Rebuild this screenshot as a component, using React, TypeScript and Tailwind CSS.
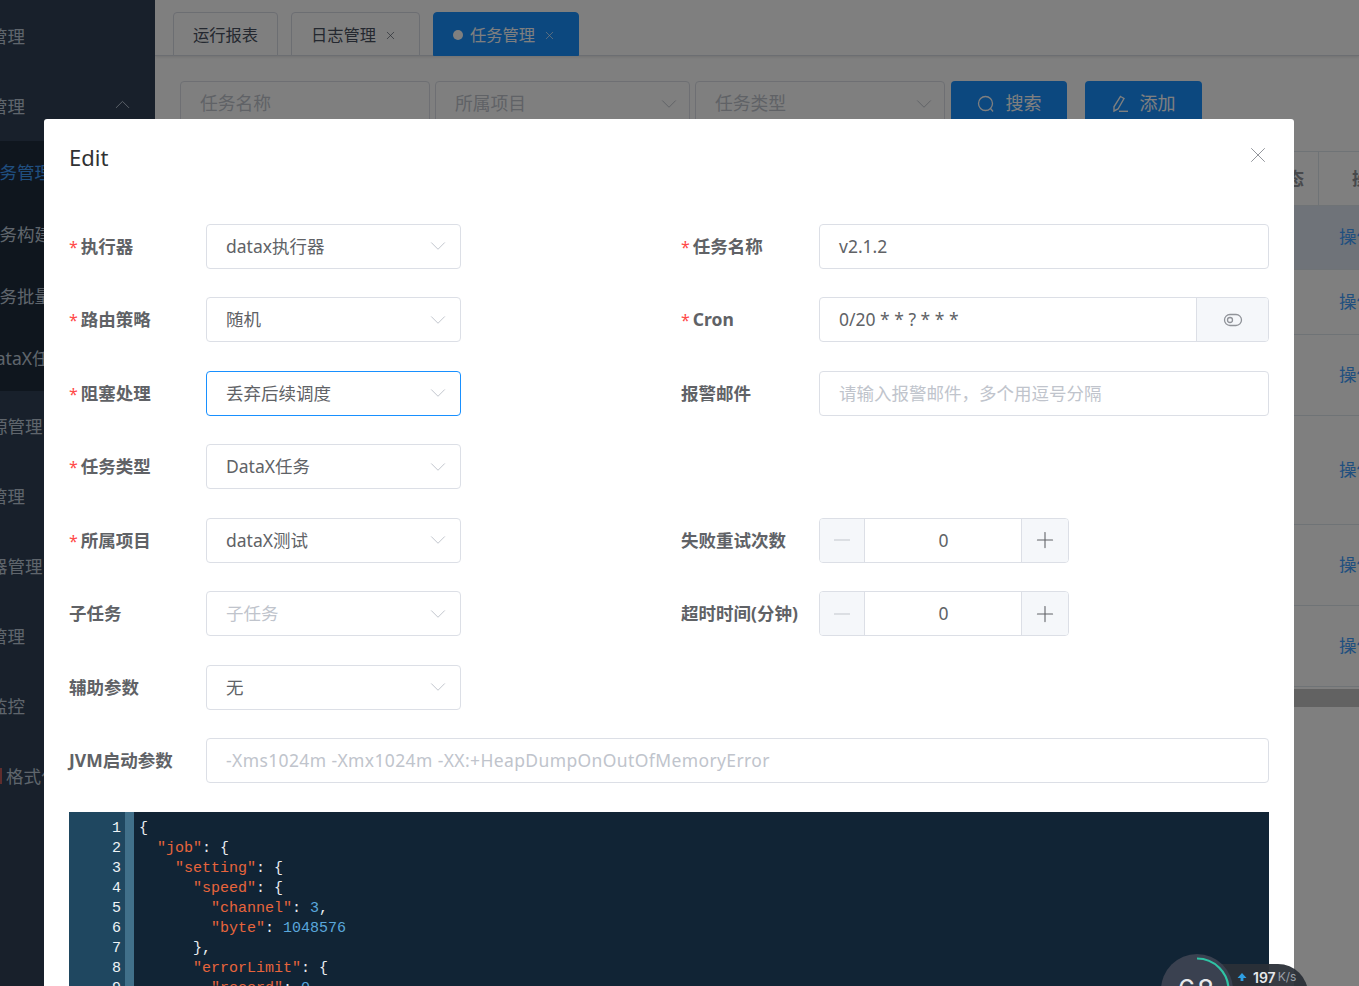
import React from "react";
import { ChevronDown, ChevronUp, Plus, Minus, X } from "lucide-react";

const cjk = "font-['Noto_Sans','Noto_Sans_CJK_SC',sans-serif]";

function Select({ value, placeholder, focus }: { value: string; placeholder?: boolean; focus?: boolean }) {
  return (
    <div className={`w-[255px] h-[45px] rounded-[4px] border flex items-center justify-between pl-[19px] pr-[9px] text-[17.5px] ${focus ? "border-[#1890ff]" : "border-[#dcdfe6]"} ${placeholder ? "text-[#c0c4cc]" : "text-[#606266]"}`}>
      <span className="pb-[1px]">{value}</span>
      <ChevronDown size={26} strokeWidth={0.9} className="text-[#c0c4cc]" />
    </div>
  );
}

function Field({ label, req, right, children }: { label?: string; req?: boolean; right?: boolean; children?: React.ReactNode }) {
  return (
    <div className="flex items-center h-[45px]">
      <div className={`${right ? "w-[138px]" : "w-[137px]"} pb-[1px] text-[17.5px] font-bold text-[#606266] whitespace-nowrap shrink-0`}>
        {req && <span className="text-[#ff4949] text-[16px] font-normal mr-[3px]">*</span>}
        {label}
      </div>
      {children}
    </div>
  );
}

function NumberInput() {
  return (
    <div className="w-[250px] h-[45px] rounded-[4px] border border-[#dcdfe6] flex text-[17.5px] text-[#606266] overflow-hidden">
      <div className="w-[45px] bg-[#f5f7fa] border-r border-[#dcdfe6] flex items-center justify-center">
        <Minus size={26} strokeWidth={0.9} className="text-[#c0c4cc]" />
      </div>
      <div className="flex-1 flex items-center justify-center pb-[1px] pl-[1px]">0</div>
      <div className="w-[47px] bg-[#f5f7fa] border-l border-[#dcdfe6] flex items-center justify-center">
        <Plus size={26} strokeWidth={1} className="text-[#606266]" />
      </div>
    </div>
  );
}

const P = ({ c }: { c: string }) => <span className="text-[#e9edf0]">{c}</span>;
const S = ({ c }: { c: string }) => <span className="text-[#e8643c]">{c}</span>;
const N = ({ c }: { c: string }) => <span className="text-[#5aa7dc]">{c}</span>;

const code: React.ReactNode[] = [
  <P c="{" />,
  <>  <S c={'"job"'} /><P c=": {" /></>,
  <>    <S c={'"setting"'} /><P c=": {" /></>,
  <>      <S c={'"speed"'} /><P c=": {" /></>,
  <>        <S c={'"channel"'} /><P c=": " /><N c="3" /><P c="," /></>,
  <>        <S c={'"byte"'} /><P c=": " /><N c="1048576" /></>,
  <>      <P c="}," /></>,
  <>      <S c={'"errorLimit"'} /><P c=": {" /></>,
  <>        <S c={'"record"'} /><P c=": " /><N c="0" /><P c="," /></>,
];

const subItems = ["任务管理", "任务构建", "任务批量构建", "DataX任务模板"];

function Sidebar() {
  const Top = ({ t }: { t: string }) => (
    <div className="h-[70px] flex items-center ml-[-45px] text-[17.5px] text-[#bfcbd9] whitespace-nowrap shrink-0">{t}</div>
  );
  return (
    <div className="w-[155px] shrink-0 bg-[#304156] overflow-hidden pt-[1px]">
      <Top t="调度管理" />
      <div className="h-[70px] flex items-center justify-between text-[17.5px] text-[#bfcbd9]">
        <span className="ml-[-45px] whitespace-nowrap">任务管理</span>
        <ChevronUp size={25} strokeWidth={0.9} className="mr-[20px] mt-[-3px]" />
      </div>
      <div className="bg-[#1f2d3d] h-[250px] flex flex-col text-[17.5px]">
        {subItems.map((s, i) => (
          <div key={s} className={`h-[62px] flex items-center whitespace-nowrap ${i === 0 ? "text-[#409eff]" : "text-[#bfcbd9]"}`}>
            <span className={i === 3 ? "ml-[-17px]" : "ml-[-18px]"}>{s}</span>
          </div>
        ))}
      </div>
      <Top t="数据源管理" />
      <Top t="项目管理" />
      <Top t="执行器管理" />
      <Top t="用户管理" />
      <Top t="运行监控" />
      <div className="h-[70px] flex items-center text-[17.5px] text-[#bfcbd9] whitespace-nowrap">
        <span className="w-[2px] h-[16px] bg-[#bf5b5b] mr-[4px]" />
        格式化
      </div>
    </div>
  );
}

function Tab({ t, active, close, w }: { t: string; active?: boolean; close?: boolean; w: string }) {
  return (
    <div className={`${w} h-[44px] rounded-t-[4px] border flex items-center pl-[19px] pt-[2px] text-[16.25px] whitespace-nowrap ${active ? "bg-[#1890ff] border-[#1890ff] text-white" : "bg-white border-[#d8dce5] text-[#495060]"}`}>
      {active && <span className="w-[10px] h-[10px] rounded-full bg-white mr-[7px]" />}
      {t}
      {close && <X size={13} strokeWidth={1.2} className="ml-[8px]" />}
    </div>
  );
}

function FilterSelect({ t, w, arrow }: { t: string; w: string; arrow?: boolean }) {
  return (
    <div className={`${w} h-[45px] rounded-[4px] border border-[#dcdfe6] flex items-center justify-between pl-[19px] pr-[7px] text-[17.75px] text-[#c0c4cc]`}>
      {t}
      {arrow && <ChevronDown size={26} strokeWidth={0.9} />}
    </div>
  );
}

function Background() {
  const rows = [64, 65, 81, 109, 81, 81];
  return (
    <div className="flex-1 min-w-0 bg-white flex flex-col overflow-hidden">
      <div className="h-[56px] shrink-0 border-b border-[#d8dce5] shadow-[0_1px_3px_rgba(0,0,0,0.12)] pt-[12px] pl-[18px] flex gap-[13px]">
        <Tab t="运行报表" w="w-[105px]" />
        <Tab t="日志管理" close w="w-[129px]" />
        <Tab t="任务管理" active close w="w-[146px]" />
      </div>
      <div className="pl-[25px] pt-[25px] flex shrink-0">
        <FilterSelect t="任务名称" w="w-[250px] mr-[5px]" />
        <FilterSelect t="所属项目" arrow w="w-[255px] mr-[5px]" />
        <FilterSelect t="任务类型" arrow w="w-[250px] mr-[6px]" />
        <div className="w-[116px] h-[45px] rounded-[4px] bg-[#1890ff] text-white text-[18px] flex items-center justify-center gap-[11px] mr-[18px]">
          <svg width="18" height="18" viewBox="0 0 18 18" fill="none" stroke="currentColor" strokeWidth="1.3"><circle cx="8.5" cy="8.5" r="7" /><path d="M13.5 13.5 16 16.5" /></svg>
          搜索
        </div>
        <div className="w-[117px] h-[45px] rounded-[4px] bg-[#1890ff] text-white text-[18px] flex items-center justify-center gap-[11px]">
          <svg width="17" height="18" viewBox="0 0 17 18" fill="none" stroke="currentColor" strokeWidth="1.4"><path d="M8.5 1.5 12 3.5 6 14 2 16 2 11.8z" /><path d="M7 16.3H16" /></svg>
          添加
        </div>
      </div>
      <div className="mt-[25px] ml-auto w-[65px] shrink-0">
        <div className="h-[55px] border-y border-[#dfe6ec] flex text-[17.5px] font-bold text-[#909399]">
          <div className="w-[25px] shrink-0 border-r border-[#dfe6ec] flex items-center whitespace-nowrap justify-end pr-[14px]">状态</div>
          <div className="flex-1 min-w-0 flex items-center pl-[33px] whitespace-nowrap">操作</div>
        </div>
        {rows.map((h, i) => (
          <div key={i} className={`flex items-center border-b border-[#dfe6ec] text-[17.5px] text-[#409eff] pl-[45px] pb-[2px] whitespace-nowrap overflow-hidden ${i === 0 ? "bg-[#dfe6f2]" : "bg-white"}`} style={{ height: h }}>
            操作
          </div>
        ))}
        <div className="h-[18px] mt-[2px] bg-[#c4c4c4]" />
      </div>
    </div>
  );
}

function Widget() {
  return (
    <div className="absolute left-[1161px] top-[954px] w-[150px] h-[80px]">
      <div className="absolute left-[30px] top-[10px] w-[117px] h-[60px] rounded-full bg-[#2b3038]/95 flex items-start pl-[46px] pt-[3px] text-[14px] font-semibold text-[#e6e8eb] font-['Inter',sans-serif]">
        <svg width="10" height="10" viewBox="0 0 10 10" className="mt-[5px] mr-[6px]"><path d="M5 1 9.5 6H6.4v3H3.6V6H.5z" fill="#2f9fe3" /></svg>
        197<span className="text-[12px] font-normal text-[#9aa0a8] ml-[2px] mt-[1px]">K/s</span>
      </div>
      <svg width="72" height="72" viewBox="0 0 72 72" className="absolute left-0 top-0">
        <circle cx="36" cy="36" r="36" fill="#3a4150" />
        <path d="M36 4.5A31.5 31.5 0 0 1 67.5 36" fill="none" stroke="#2fc4a5" strokeWidth="2.2" />
      </svg>
      <div className="absolute left-0 top-[16px] w-[72px] text-center text-[28px] tracking-[2px] text-[#e6e8eb] font-['Inter',sans-serif] leading-[40px]">68</div>
    </div>
  );
}

export default function App() {
  return (
    <div className={`relative w-[1359px] h-[986px] overflow-hidden flex ${cjk}`}>
      <Sidebar />
      <Background />
      <div className="absolute inset-0 bg-black/50" />
      <div className="absolute left-[44px] top-[119px] w-[1250px] h-[900px] bg-white rounded-[3px] overflow-hidden px-[25px]">
        <div className="h-[104.75px] relative">
          <div className="pt-[21px] text-[22px] leading-[34px] text-[#303133]">Edit</div>
          <X size={26} strokeWidth={0.9} className="absolute right-[-2px] top-[23px] text-[#909399]" />
        </div>
        <div className="grid grid-cols-[612px_588px] gap-y-[28.5px]">
          <Field label="执行器" req><Select value="datax执行器" /></Field>
          <Field label="任务名称" req right>
            <div className="w-[450px] h-[45px] rounded-[4px] border border-[#dcdfe6] flex items-center pl-[19px] pb-[1px] text-[17.5px] text-[#606266]">v2.1.2</div>
          </Field>
          <Field label="路由策略" req><Select value="随机" /></Field>
          <Field label="Cron" req right>
            <div className="w-[450px] h-[45px] rounded-[4px] border border-[#dcdfe6] flex text-[17.5px] text-[#606266] overflow-hidden">
              <div className="flex-1 flex items-center pl-[19px] pb-[1px]">0/20 * * ? * * *</div>
              <div className="w-[72px] bg-[#f5f7fa] border-l border-[#dcdfe6] flex items-center justify-center">
                <svg width="20" height="14" viewBox="0 0 20 14" fill="none" stroke="#909399" strokeWidth="1.3"><rect x="1.5" y="1.5" width="17" height="11" rx="5.5" /><circle cx="7" cy="7" r="2.5" /></svg>
              </div>
            </div>
          </Field>
          <Field label="阻塞处理" req><Select value="丢弃后续调度" focus /></Field>
          <Field label="报警邮件" right>
            <div className="w-[450px] h-[45px] rounded-[4px] border border-[#dcdfe6] flex items-center pl-[19px] pb-[1px] text-[17.5px] text-[#c0c4cc]">请输入报警邮件，多个用逗号分隔</div>
          </Field>
          <Field label="任务类型" req><Select value="DataX任务" /></Field>
          <div />
          <Field label="所属项目" req><Select value="dataX测试" /></Field>
          <Field label="失败重试次数" right><NumberInput /></Field>
          <Field label="子任务"><Select value="子任务" placeholder /></Field>
          <Field label="超时时间(分钟)" right><NumberInput /></Field>
          <Field label="辅助参数"><Select value="无" /></Field>
          <div />
          <div className="col-span-2">
            <Field label="JVM启动参数">
              <div className="flex-1 h-[45px] rounded-[4px] border border-[#dcdfe6] flex items-center pl-[19px] pb-[1px] text-[17.5px] tracking-[0.38px] text-[#c0c4cc]">-Xms1024m -Xmx1024m -XX:+HeapDumpOnOutOfMemoryError</div>
            </Field>
          </div>
        </div>
        <div className="mt-[28.75px] h-[200px] bg-[#112435] flex font-['Liberation_Mono',monospace] text-[15px] leading-[20px]">
          <div className="w-[56px] bg-[#1f4760] text-right pr-[4px] pt-[7px] text-[#eef3f6]">
            {code.map((_, i) => <div key={i}>{i + 1}</div>)}
          </div>
          <div className="w-[9px] bg-[#41708a]" />
          <div className="pl-[5px] pt-[7px] whitespace-pre">
            {code.map((c, i) => <div key={i}>{c}</div>)}
          </div>
        </div>
      </div>
      <Widget />
    </div>
  );
}
